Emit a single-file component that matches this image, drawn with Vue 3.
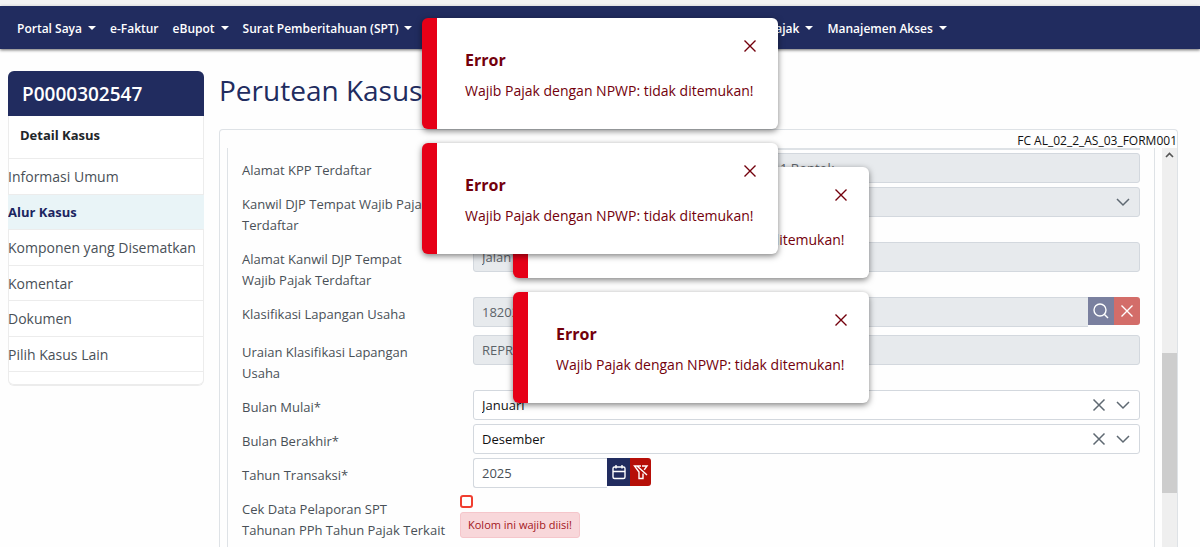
<script setup>
const menuStart = [
  { text: 'Portal Saya', caret: true },
  { text: 'e-Faktur', caret: false },
  { text: 'eBupot', caret: true },
  { text: 'Surat Pemberitahuan (SPT)', caret: true },
]
const menuMiddle = [
  { text: 'Pembayaran', caret: true },
  { text: 'Buku Besar', caret: true },
  { text: 'Layanan Wajib Pajak', caret: true },
]
const sections = ['Informasi Umum', 'Alur Kasus', 'Komponen yang Disematkan', 'Komentar', 'Dokumen', 'Pilih Kasus Lain']
const toastStacks = [
  { name: 'back', ids: [1, 2] },
  { name: 'front', ids: [3, 4] },
]
</script>

<template>
  <div class="page">
    <div class="strip"></div>
    <nav class="navbar">
      <a v-for="m in menuStart" :key="m.text" href="#">{{ m.text }}<i v-if="m.caret" class="caret"></i></a>
      <div class="nav-group">
        <a v-for="m in menuMiddle" :key="m.text" href="#">{{ m.text }}<i v-if="m.caret" class="caret"></i></a>
      </div>
      <a href="#">Manajemen Akses<i class="caret"></i></a>
    </nav>

    <div class="body">
      <aside class="sidebar">
        <h2>P0000302547</h2>
        <h3>Detail Kasus</h3>
        <div class="sections">
          <a v-for="s in sections" :key="s" href="#" :class="{ active: s === 'Alur Kasus' }">{{ s }}</a>
        </div>
      </aside>

      <main>
        <h1>Perutean Kasus</h1>
        <section class="panel">
          <div class="code">FC AL_02_2_AS_03_FORM001</div>
          <div class="viewport">
            <form class="form" @submit.prevent>
              <div class="edge"></div>
              <div class="row">
                <label for="kpp">Alamat KPP Terdaftar</label>
                <input id="kpp" class="field" disabled value="Jalan Raya Serang Km 3 Cikupa Mas 124, Gedung 1 Bontok" />
              </div>
              <div class="row">
                <label for="kanwil">Kanwil DJP Tempat Wajib Pajak Terdaftar</label>
                <div class="pick">
                  <select id="kanwil" class="field" disabled><option></option></select>
                  <svg class="chev" viewBox="0 0 14 14"><path d="M1 4l6 6 6-6" /></svg>
                </div>
              </div>
              <div class="row">
                <label for="alamat">Alamat Kanwil DJP Tempat<br />Wajib Pajak Terdaftar</label>
                <input id="alamat" class="field" disabled value="Jalan" />
              </div>
              <div class="row grouped">
                <label for="klu">Klasifikasi Lapangan Usaha</label>
                <div class="group">
                  <input id="klu" class="field" disabled value="18202" />
                  <button class="btn search" type="button" aria-label="Cari">
                    <svg viewBox="0 0 16 16"><circle cx="7" cy="7" r="6" /><path d="M11.5 11.5l3.5 3.5" /></svg>
                  </button>
                  <button class="btn clear" type="button" aria-label="Hapus">
                    <svg viewBox="0 0 16 16"><path d="M2.500 2.500l11 11M13.500 2.500l-11 11" /></svg>
                  </button>
                </div>
              </div>
              <div class="row">
                <label for="uraian">Uraian Klasifikasi Lapangan Usaha</label>
                <input id="uraian" class="field" disabled value="REPRODUKSI" />
              </div>
              <div class="row">
                <label for="mulai">Bulan Mulai*</label>
                <div class="pick">
                  <select id="mulai" class="field"><option>Januari</option></select>
                  <svg class="wipe" viewBox="0 0 14 14"><path d="M1.500 1.500l11 11M12.500 1.500l-11 11" /></svg>
                  <svg class="chev" viewBox="0 0 14 14"><path d="M1 4l6 6 6-6" /></svg>
                </div>
              </div>
              <div class="row">
                <label for="akhir">Bulan Berakhir*</label>
                <div class="pick">
                  <select id="akhir" class="field"><option>Desember</option></select>
                  <svg class="wipe" viewBox="0 0 14 14"><path d="M1.500 1.500l11 11M12.500 1.500l-11 11" /></svg>
                  <svg class="chev" viewBox="0 0 14 14"><path d="M1 4l6 6 6-6" /></svg>
                </div>
              </div>
              <div class="row">
                <label for="tahun">Tahun Transaksi*</label>
                <div class="group date">
                  <input id="tahun" class="field" value="2025" />
                  <button class="btn cal" type="button" aria-label="Pilih tahun">
                    <svg viewBox="0 0 16 16"><rect x="2" y="3" width="12" height="11.5" rx="1.5" /><path d="M2 7.500h12M5 1v3.500M11 1v3.500" /></svg>
                  </button>
                  <button class="btn unfilter" type="button" aria-label="Kosongkan tahun">
                    <svg viewBox="0 0 16 16"><path d="M8 2H1.500L6 8v6.500h4V9.500M9 2h5L11.200 5.800M4 2l10 9" /></svg>
                  </button>
                </div>
              </div>
              <div class="row check">
                <label for="cek">Cek Data Pelaporan SPT<br />Tahunan PPh Tahun Pajak Terkait ini</label>
                <div>
                  <input id="cek" type="checkbox" />
                  <p class="invalid">Kolom ini wajib diisi!</p>
                </div>
              </div>
            </form>
            <div class="scrollbar">
              <svg viewBox="0 0 15 15"><path d="M4 9l3.500-3.500L11 9" /></svg>
              <div class="thumb"></div>
            </div>
          </div>
        </section>
      </main>
    </div>

    <div v-for="s in toastStacks" :key="s.name" class="toasts" :class="s.name">
      <div v-for="id in s.ids" :key="id" class="toast" role="alert">
        <div>
          <strong>Error</strong>
          <p>Wajib Pajak dengan NPWP: tidak ditemukan!</p>
        </div>
        <button type="button" aria-label="Tutup">
          <svg viewBox="0 0 14 14"><path d="M1.500 1.500l11 11M12.500 1.500l-11 11" /></svg>
        </button>
      </div>
    </div>
  </div>
</template>

<style>
body {
  margin: 0;
}
</style>

<style scoped>
* {
  box-sizing: border-box;
}
.page {
  position: relative;
  display: flex;
  flex-direction: column;
  height: 100vh;
  overflow: hidden;
  background: #fefefe;
  color: #495057;
  font: 14px/21px "Open Sans", "Noto Sans", sans-serif;
}
svg {
  display: block;
  fill: none;
  stroke: currentColor;
}
h1, h2, h3, p {
  margin: 0;
}
a {
  color: inherit;
  text-decoration: none;
}
.strip {
  flex: none;
  height: 6px;
  background: #f3f3f3;
  border-bottom: 1px solid #fff;
}
.navbar {
  flex: none;
  display: flex;
  align-items: center;
  gap: 14px;
  height: 43px;
  padding: 2px 17px 0;
  background: #212c5f;
  box-shadow: 0 1px 3px rgba(0, 0, 0, 0.6);
  color: #fff;
  font-size: 12px;
  font-weight: 600;
  white-space: nowrap;
}
.navbar a {
  display: flex;
  align-items: center;
}
.nav-group {
  display: flex;
  justify-content: space-between;
  width: 387px;
}
.caret {
  margin: 0 0 2px 6px;
  border: 4px solid transparent;
  border-top-color: #fff;
  border-bottom: 0;
}
.body {
  flex: 1;
  min-height: 0;
  display: flex;
  align-items: flex-start;
  gap: 15px;
  padding: 22px 22px 0 8px;
}
.sidebar {
  flex: none;
  width: 196px;
  padding-bottom: 13px;
  border-bottom: 1px solid #ececec;
  border-radius: 6px;
  overflow: hidden;
  background: #fff;
  box-shadow: inset 0 0 0 1px #ececec;
}
.sidebar h2 {
  padding: 1px 14px 0;
  background: #212c5f;
  color: #fff;
  font-size: 19px;
  font-weight: 600;
  line-height: 44px;
}
.sidebar h3 {
  padding: 0 12px 4px;
  color: #212529;
  font-size: 13px;
  font-weight: 700;
  line-height: 38px;
}
.sections {
  display: flex;
  flex-direction: column;
  height: 214px;
  border-top: 1px solid #ececec;
}
.sections a {
  flex: 1;
  display: flex;
  align-items: center;
  padding-top: 1px;
  border-bottom: 1px solid #ececec;
}
.sections .active {
  background: #e9f4f7;
  color: #1b2560;
  font-size: 13px;
  font-weight: 700;
}
main {
  flex: 1;
  min-width: 0;
  align-self: stretch;
  display: flex;
  flex-direction: column;
}
h1 {
  flex: none;
  height: 58px;
  color: #212c5f;
  font-size: 28px;
  font-weight: 400;
  line-height: 38px;
}
.panel {
  flex: 1;
  min-height: 0;
  display: flex;
  flex-direction: column;
  border: 1px solid #dee2e6;
  border-bottom: 0;
  border-radius: 4px 4px 0 0;
}
.code {
  flex: none;
  height: 18px;
  color: #111;
  font-size: 12px;
  text-align: right;
}
.viewport {
  flex: 1;
  min-height: 0;
  display: flex;
  gap: 7px;
  padding-left: 7px;
  overflow: hidden;
}
.form {
  flex: 1;
  min-width: 0;
  align-self: flex-start;
  padding: 0 14px;
  border: 1px solid #dee2e6;
  border-width: 0 1px;
  font-size: 13px;
}
.edge {
  height: 2px;
  margin: 0 0 3px 231px;
  background: #dee2e6;
}
.row {
  display: grid;
  grid-template-columns: 197px 1fr;
  column-gap: 34px;
  align-items: start;
}
.row.grouped {
  padding-bottom: 4px;
}
.row.check {
  grid-template-columns: 210px 1fr;
  column-gap: 8px;
}
label {
  padding: 7px 0 6px;
}
.field {
  display: block;
  width: 100%;
  min-width: 0;
  height: 30px;
  margin: 0;
  padding: 0 8px;
  border: 1px solid #d3d8de;
  border-radius: 3px;
  appearance: none;
  background: #fff;
  color: #495057;
  font: inherit;
  opacity: 1;
}
.field:disabled {
  background: #e7eaed;
  color: #5c6369;
}
select.field {
  color: #111;
}
.pick {
  position: relative;
}
.pick svg {
  position: absolute;
  top: 8px;
  width: 14px;
  height: 14px;
  color: #5f6972;
  stroke-width: 1.5;
  pointer-events: none;
}
.chev {
  right: 10px;
}
.wipe {
  right: 34px;
}
.group {
  display: flex;
}
.group .field {
  flex: 1;
  border-right: 0;
  border-radius: 3px 0 0 3px;
}
.date {
  width: 178px;
}
.btn {
  display: grid;
  place-items: center;
  width: 26px;
  height: 28px;
  padding: 0;
  border: 0;
  color: #fff;
}
.btn svg {
  width: 16px;
  height: 16px;
  stroke-width: 1.4;
}
.search {
  background: #7a809f;
}
.clear {
  border-radius: 0 3px 3px 0;
  background: #d36d69;
}
.cal {
  width: 23px;
  background: #212c5f;
}
.unfilter {
  width: 21px;
  border-radius: 0 3px 3px 0;
  background: #b60f08;
}
#cek {
  display: block;
  width: 13px;
  height: 13px;
  margin: 3px 0 4px;
  border: 2px solid #f03e30;
  border-radius: 3px;
  appearance: none;
  background: #fff;
}
.invalid {
  width: max-content;
  padding: 1px 7px 2px;
  border: 1px solid #f5c6cb;
  border-radius: 3px;
  background: #f8d7da;
  color: #a3161c;
  font-size: 11px;
}
.scrollbar {
  width: 15px;
  background: #efefef;
}
.scrollbar svg {
  width: 15px;
  height: 15px;
  stroke: #555;
  stroke-width: 1.6;
}
.thumb {
  height: 140px;
  margin-top: 190px;
  background: #cdcdcd;
}
.toasts {
  position: absolute;
  display: flex;
  flex-direction: column;
  gap: 14px;
  width: 356px;
}
.front {
  top: 18px;
  left: 422px;
}
.back {
  top: 167px;
  left: 513px;
}
.toast {
  position: relative;
  height: 111px;
  padding: 32px 28px;
  border-left: 15px solid #e60017;
  border-radius: 6px;
  background: #fff;
  box-shadow: 0 2px 6px rgba(0, 0, 0, 0.5);
  color: #73000c;
  white-space: nowrap;
}
.toast strong {
  display: block;
  margin-bottom: 9px;
  font-size: 16px;
}
.toast button {
  position: absolute;
  top: 21px;
  right: 21px;
  padding: 0;
  border: 0;
  background: none;
  color: inherit;
}
.toast svg {
  width: 14px;
  height: 14px;
  stroke-width: 1.4;
}
</style>
